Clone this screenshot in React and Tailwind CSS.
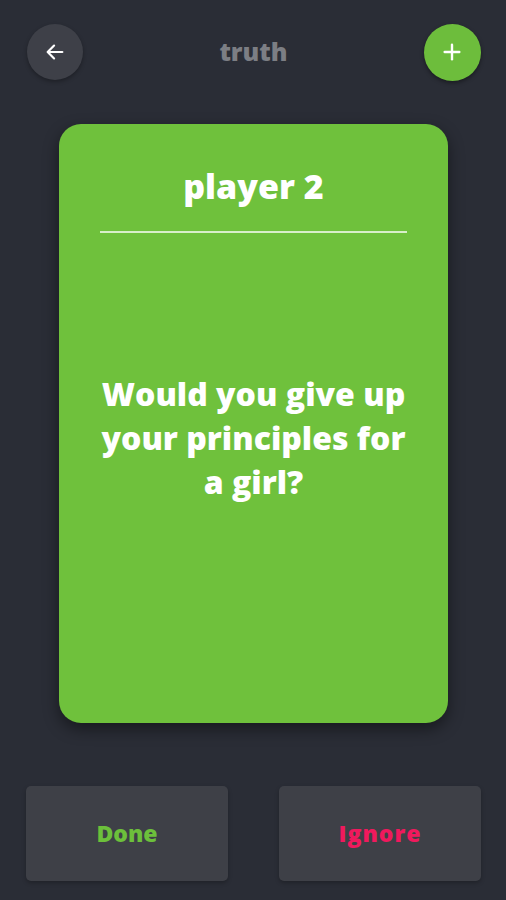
import React from "react";

export default function App() {
  const font = { fontFamily: "'Open Sans', Lato, sans-serif" };
  return (
    <div className="w-[506px] h-[900px] bg-[#2a2d36] flex flex-col overflow-hidden" style={font}>
      <div className="flex items-center justify-between pl-[27px] pr-[25px] pt-[24px] h-[80px]">
        <div className="w-[56px] h-[56px] rounded-full bg-[#3e4048] flex items-center justify-center shadow-[0_2px_4px_rgba(0,0,0,0.3)]">
          <svg width="22" height="22" viewBox="0 0 24 24" fill="none" stroke="white" strokeWidth="2.4" strokeLinecap="round" strokeLinejoin="round">
            <path d="M20 12H5" />
            <path d="M11 5l-7 7 7 7" />
          </svg>
        </div>
        <div className="text-[25px] font-extrabold text-[#7c7e84] leading-none pb-[2px]">truth</div>
        <div className="w-[57px] h-[57px] rounded-full bg-[#6dbd3c] flex items-center justify-center shadow-[0_2px_4px_rgba(0,0,0,0.4)]">
          <svg width="22" height="22" viewBox="0 0 24 24" fill="none" stroke="white" strokeWidth="2.6" strokeLinecap="round">
            <path d="M12 4v16" />
            <path d="M4 12h16" />
          </svg>
        </div>
      </div>
      <div className="ml-[59px] w-[389px] mt-[44px] h-[599px] rounded-[22px] bg-[#6fc13c] shadow-[0_6px_16px_rgba(0,0,0,0.45)] flex flex-col items-center">
        <div className="pt-[45px] h-[107px] text-[34px] font-extrabold text-white leading-none">player 2</div>
        <div className="w-[307px] h-[2px] bg-[#d8efc9]" />
        <div className="flex-1 flex items-center justify-center pb-[80px]">
          <div className="text-[32px] font-extrabold text-white leading-[44px] text-center whitespace-nowrap">
            Would you give up<br />your principles for<br />a girl?
          </div>
        </div>
      </div>
      <div className="flex justify-between pl-[26px] pr-[25px] mt-[63px]">
        <div className="w-[202px] h-[95px] rounded-[5px] bg-[#3e4047] flex items-center justify-center shadow-[0_2px_4px_rgba(0,0,0,0.25)]">
          <span className="text-[23px] font-extrabold text-[#6cc03b]">Done</span>
        </div>
        <div className="w-[202px] h-[95px] rounded-[5px] bg-[#3e4047] flex items-center justify-center shadow-[0_2px_4px_rgba(0,0,0,0.25)]">
          <span className="text-[23px] font-extrabold tracking-[1px] text-[#f0195d]">Ignore</span>
        </div>
      </div>
    </div>
  );
}
